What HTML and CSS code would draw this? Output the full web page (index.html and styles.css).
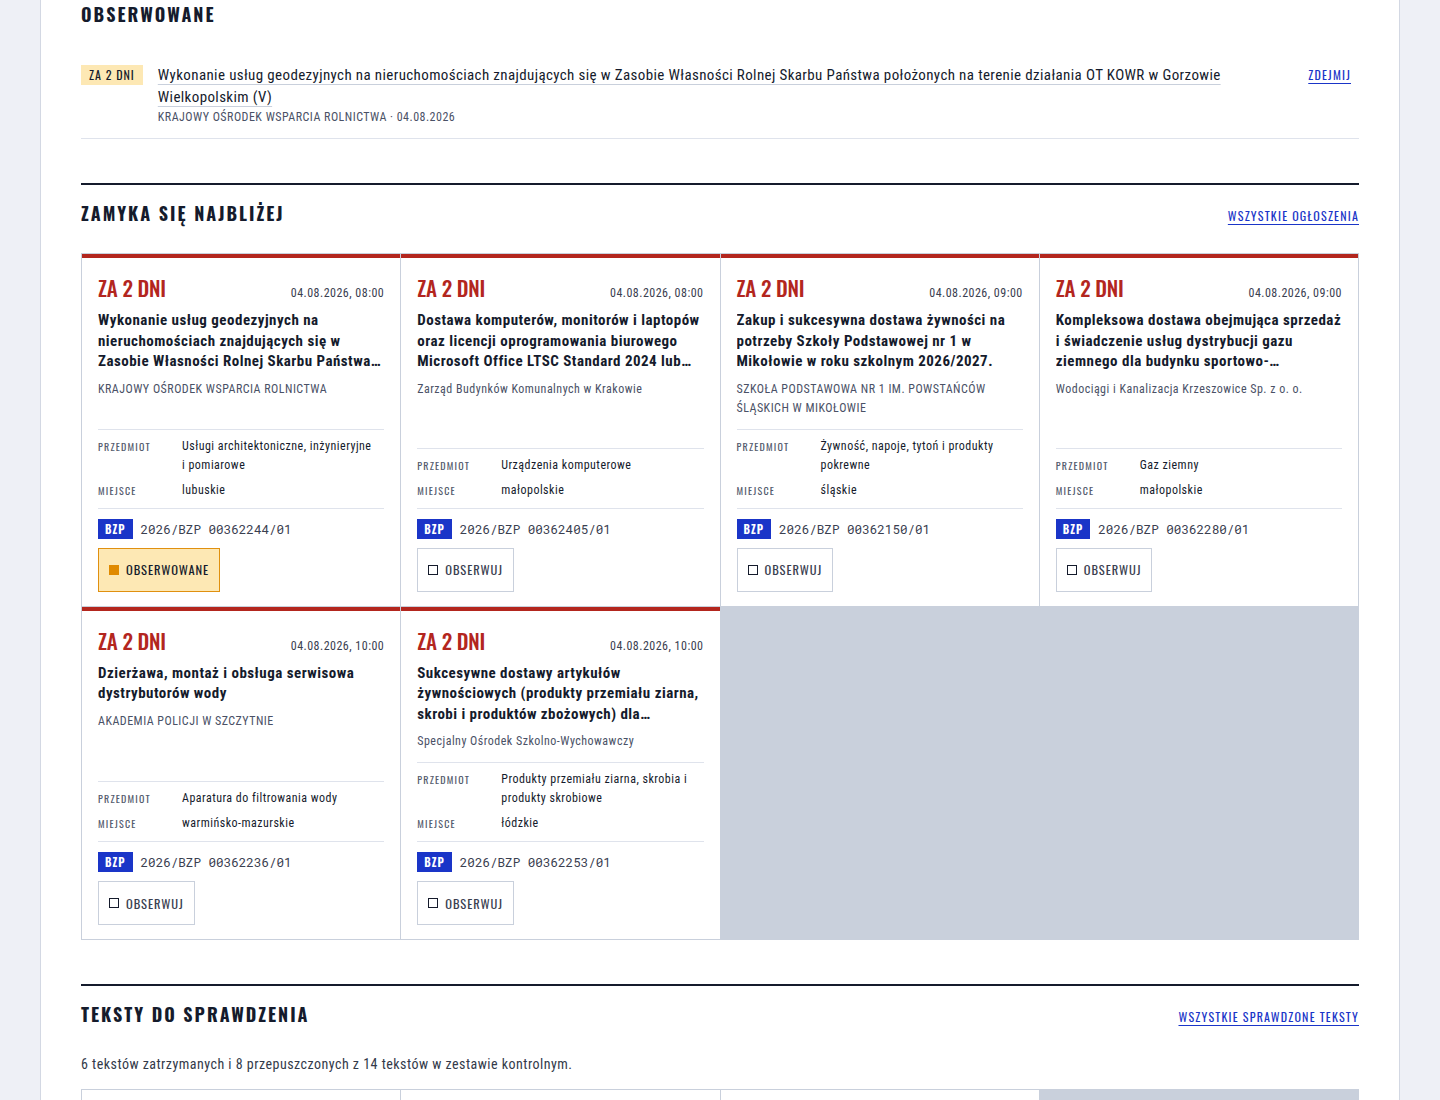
FILE: index.html
```html
<!DOCTYPE html>
<html lang="pl">
<head>
    <meta charset="UTF-8">
    <meta name="viewport" content="width=device-width, initial-scale=1.0">
    <title>Przetargi – pulpit</title>
    <link rel="stylesheet" href="styles.css">
</head>
<body>
    <main class="page">

        <!-- Obserwowane ogłoszenia -->
        <section class="watched">
            <div class="section-head first">
                <h2>Obserwowane</h2>
            </div>
            <div class="watch-item">
                <span class="deadline-badge">ZA 2 DNI</span>
                <div class="watch-body">
                    <a class="watch-title" href="#">Wykonanie usług geodezyjnych na nieruchomościach znajdujących się w Zasobie Własności Rolnej Skarbu Państwa położonych na terenie działania OT KOWR w Gorzowie Wielkopolskim (V)</a>
                    <div class="watch-meta">KRAJOWY OŚRODEK WSPARCIA ROLNICTWA · 04.08.2026</div>
                </div>
                <a class="link-caps" href="#">Zdejmij</a>
            </div>
        </section>

        <!-- Ogłoszenia z najbliższym terminem -->
        <section class="block">
            <div class="section-head">
                <h2>Zamyka się najbliżej</h2>
                <a class="link-caps" href="#">Wszystkie ogłoszenia</a>
            </div>
            <div class="card-grid" id="closingGrid"></div>
        </section>

        <!-- Teksty kontrolne -->
        <section class="block">
            <div class="section-head">
                <h2>Teksty do sprawdzenia</h2>
                <a class="link-caps" href="#">Wszystkie sprawdzone teksty</a>
            </div>
            <p class="summary">6 tekstów zatrzymanych i 8 przepuszczonych z 14 tekstów w zestawie kontrolnym.</p>
            <div class="card-grid check-grid">
                <div class="check-card"></div>
                <div class="check-card"></div>
                <div class="check-card"></div>
            </div>
        </section>
    </main>

    <script src="app.js"></script>
</body>
</html>
```

FILE: app.js
```js
const notices = [
    {
        date: "04.08.2026, 08:00",
        title: "Wykonanie usług geodezyjnych na nieruchomościach znajdujących się w Zasobie Własności Rolnej Skarbu Państwa położonych na terenie działania OT KOWR w Gorzowie Wielkopolskim (V)",
        org: "KRAJOWY OŚRODEK WSPARCIA ROLNICTWA",
        subject: "Usługi architektoniczne, inżynieryjne i pomiarowe",
        place: "lubuskie",
        number: "2026/BZP 00362244/01",
        watched: true
    },
    {
        date: "04.08.2026, 08:00",
        title: "Dostawa komputerów, monitorów i laptopów oraz licencji oprogramowania biurowego Microsoft Office LTSC Standard 2024 lub równoważnego",
        org: "Zarząd Budynków Komunalnych w Krakowie",
        subject: "Urządzenia komputerowe",
        place: "małopolskie",
        number: "2026/BZP 00362405/01"
    },
    {
        date: "04.08.2026, 09:00",
        title: "Zakup i sukcesywna dostawa żywności na potrzeby Szkoły Podstawowej nr 1 w Mikołowie w roku szkolnym 2026/2027.",
        org: "SZKOŁA PODSTAWOWA NR 1 IM. POWSTAŃCÓW ŚLĄSKICH W MIKOŁOWIE",
        subject: "Żywność, napoje, tytoń i produkty pokrewne",
        place: "śląskie",
        number: "2026/BZP 00362150/01"
    },
    {
        date: "04.08.2026, 09:00",
        title: "Kompleksowa dostawa obejmująca sprzedaż i świadczenie usług dystrybucji gazu ziemnego dla budynku sportowo-rekreacyjnego",
        org: "Wodociągi i Kanalizacja Krzeszowice Sp. z o. o.",
        subject: "Gaz ziemny",
        place: "małopolskie",
        number: "2026/BZP 00362280/01"
    },
    {
        date: "04.08.2026, 10:00",
        title: "Dzierżawa, montaż i obsługa serwisowa dystrybutorów wody",
        org: "AKADEMIA POLICJI W SZCZYTNIE",
        subject: "Aparatura do filtrowania wody",
        place: "warmińsko-mazurskie",
        number: "2026/BZP 00362236/01"
    },
    {
        date: "04.08.2026, 10:00",
        title: "Sukcesywne dostawy artykułów żywnościowych (produkty przemiału ziarna, skrobi i produktów zbożowych) dla Specjalnego Ośrodka Szkolno-Wychowawczego",
        org: "Specjalny Ośrodek Szkolno-Wychowawczy",
        subject: "Produkty przemiału ziarna, skrobia i produkty skrobiowe",
        place: "łódzkie",
        number: "2026/BZP 00362253/01"
    }
];

function renderCard(n) {
    const card = document.createElement("article");
    card.className = "notice-card";
    card.innerHTML = `
        <div class="card-top">
            <span class="days-left">ZA 2 DNI</span>
            <span class="card-date">${n.date}</span>
        </div>
        <h3 class="card-title">${n.title}</h3>
        <div class="card-org">${n.org}</div>
        <div class="card-bottom">
            <dl class="card-facts">
                <dt>Przedmiot</dt><dd>${n.subject}</dd>
                <dt>Miejsce</dt><dd>${n.place}</dd>
            </dl>
            <div class="card-ref">
                <span class="bzp">BZP</span>
                <span class="ref-no">${n.number}</span>
            </div>
            <button class="watch-btn${n.watched ? " is-on" : ""}">
                <span class="box"></span>${n.watched ? "Obserwowane" : "Obserwuj"}
            </button>
        </div>`;
    return card;
}

const grid = document.getElementById("closingGrid");
notices.forEach(n => grid.appendChild(renderCard(n)));
```

FILE: styles.css
```css
body {
    margin: 0;
    background: #eef0f6;
    font-family: 'Roboto Condensed', 'Liberation Sans Narrow', 'Roboto', sans-serif;
    letter-spacing: 0.03em;
    color: #151b2c;
}
.page {
    width: 1278px;
    margin-left: 40px;
    padding: 0 40px 60px;
    background: #fff;
    border-left: 1px solid #d3d8e3;
    border-right: 1px solid #d3d8e3;
}
.section-head {
    display: flex;
    justify-content: space-between;
    align-items: center;
    padding: 14px 0 26px;
}
.section-head.first {
    padding: 0 0 36px;
}
.section-head h2 {
    margin: 0;
    font-family: 'Oswald', 'Liberation Sans Narrow', 'DejaVu Sans Condensed', sans-serif;
    font-size: 18px;
    line-height: 28px;
    font-weight: 700;
    letter-spacing: 2px;
    text-transform: uppercase;
    color: #151b2c;
}
.link-caps {
    font-family: 'Oswald', 'Liberation Sans Narrow', 'DejaVu Sans Condensed', sans-serif;
    font-size: 12px;
    letter-spacing: 1.2px;
    text-transform: uppercase;
    color: #1a35c8;
    text-decoration: underline;
    text-underline-offset: 3px;
    margin-top: 5px;
}

/* obserwowane */
.watch-item {
    display: flex;
    align-items: flex-start;
    gap: 15px;
    padding: 0 8px 12px 0;
    border-bottom: 1px solid #dfe3ec;
}
.deadline-badge {
    flex: none;
    background: #fde8b4;
    font-family: 'Oswald', 'Liberation Sans Narrow', 'DejaVu Sans Condensed', sans-serif;
    font-size: 12px;
    letter-spacing: 1px;
    line-height: 20px;
    padding: 0 8px;
    margin-top: 1px;
    color: #151b2c;
}
.watch-body {
    flex: 1;
}
.watch-title {
    font-size: 15px;
    line-height: 22px;
    letter-spacing: 0.025em;
    color: #151b2c;
    text-decoration: underline;
    text-decoration-color: #c9d0dc;
    text-underline-offset: 4px;
}
.watch-meta {
    font-size: 12px;
    line-height: 18px;
    color: #4a5166;
}
.watch-item .link-caps {
    margin-top: 2px;
}

.block {
    margin-top: 44px;
    border-top: 2px solid #151b2c;
}

/* karty */
.card-grid {
    display: grid;
    grid-template-columns: repeat(4, 1fr);
    gap: 1px;
    background: #c9d0dc;
    border: 1px solid #c9d0dc;
}
.notice-card {
    display: flex;
    flex-direction: column;
    background: #fff;
    border-top: 4px solid #b3261e;
    padding: 18px 16px 14px;
}
.card-top {
    display: flex;
    justify-content: space-between;
    align-items: baseline;
}
.days-left {
    font-family: 'Oswald', 'Liberation Sans Narrow', 'DejaVu Sans Condensed', sans-serif;
    font-size: 21px;
    line-height: 24px;
    font-weight: 500;
    letter-spacing: -0.2px;
    color: #b3261e;
}
.card-date {
    font-size: 12px;
    color: #3a4050;
}
.card-title {
    margin: 10px 0 0;
    font-size: 15px;
    line-height: 20.5px;
    font-weight: 700;
    color: #151b2c;
    display: -webkit-box;
    -webkit-line-clamp: 3;
    -webkit-box-orient: vertical;
    overflow: hidden;
}
.card-org {
    margin-top: 8px;
    font-size: 12px;
    line-height: 19px;
    color: #4a5166;
}
.card-bottom {
    margin-top: auto;
    padding-top: 11px;
}
.card-facts {
    display: grid;
    grid-template-columns: 84px 1fr;
    row-gap: 6px;
    margin: 0;
    padding: 7px 0 8px;
    border-top: 1px solid #dfe3ec;
    border-bottom: 1px solid #dfe3ec;
}
.card-facts dt {
    font-family: 'Oswald', 'Liberation Sans Narrow', 'DejaVu Sans Condensed', sans-serif;
    font-size: 10px;
    letter-spacing: 1.2px;
    line-height: 19px;
    text-transform: uppercase;
    color: #555c6e;
}
.card-facts dd {
    margin: 0;
    padding-right: 8px;
    font-size: 12px;
    line-height: 19px;
    color: #151b2c;
}
.card-ref {
    display: flex;
    align-items: center;
    gap: 8px;
    margin-top: 10px;
}
.bzp {
    background: #1a35c8;
    color: #fff;
    font-family: 'Oswald', 'Liberation Sans Narrow', 'DejaVu Sans Condensed', sans-serif;
    font-weight: 700;
    font-size: 11px;
    letter-spacing: 1px;
    line-height: 20px;
    padding: 0 7px;
}
.ref-no {
    font-family: 'Roboto Mono', 'DejaVu Sans Mono', monospace;
    font-size: 12.6px;
    letter-spacing: 0;
    color: #3a4050;
}
.watch-btn {
    display: inline-flex;
    align-items: center;
    gap: 7px;
    margin-top: 9px;
    height: 44px;
    padding: 0 10px;
    background: #fff;
    border: 1px solid #c9d0dc;
    font-family: 'Oswald', 'Liberation Sans Narrow', 'DejaVu Sans Condensed', sans-serif;
    font-size: 12.5px;
    letter-spacing: 0.9px;
    text-transform: uppercase;
    color: #3a4050;
    cursor: pointer;
}
.watch-btn .box {
    width: 8px;
    height: 8px;
    border: 1.5px solid #151b2c;
}
.watch-btn.is-on {
    background: #fde8b4;
    border-color: #e0900f;
    color: #151b2c;
}
.watch-btn.is-on .box {
    background: #e08a00;
    border-color: #e08a00;
}

/* teksty kontrolne */
.summary {
    margin: 2px 0 17px;
    font-size: 14px;
    color: #333a4a;
}
.check-card {
    background: #fff;
    height: 120px;
}
```
